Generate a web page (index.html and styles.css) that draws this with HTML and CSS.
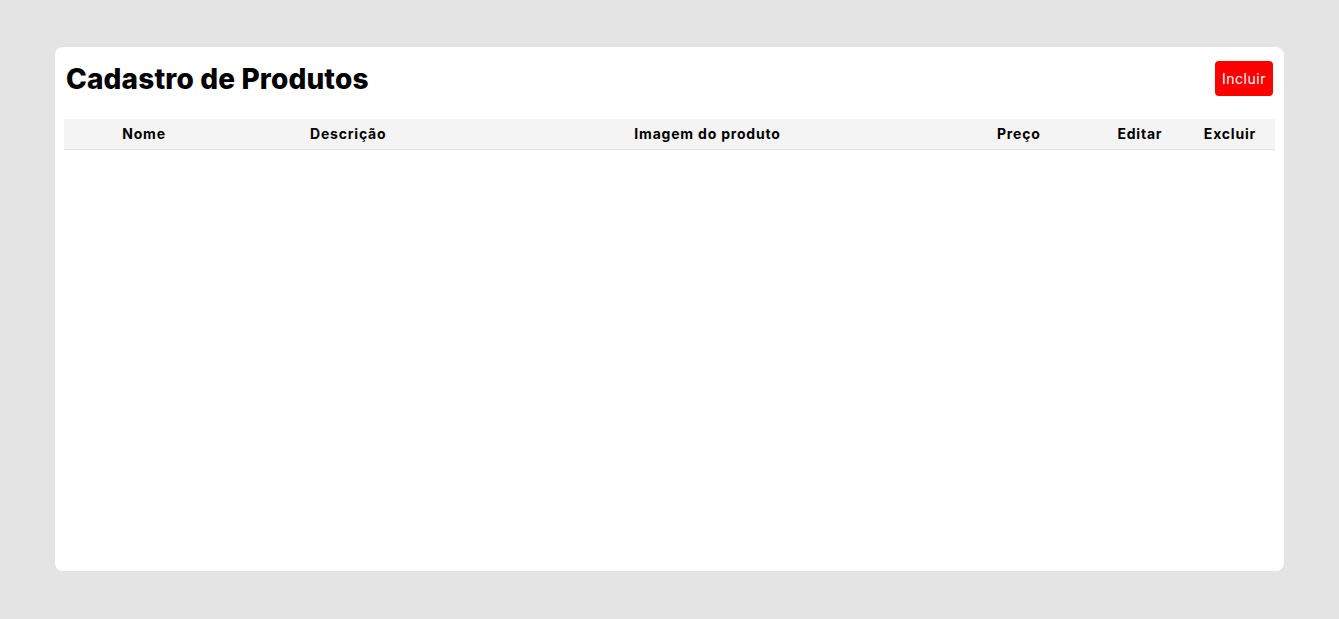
FILE: index.html
```html
<!DOCTYPE html>
<html lang="pt-BR">
<head>
<meta charset="utf-8">
<title>Cadastro de Produtos</title>
<link rel="stylesheet" href="styles.css">
</head>
<body>
<main class="card">
  <header class="card-header">
    <h1 class="title">Cadastro de Produtos</h1>
    <button class="btn-add" type="button">Incluir</button>
  </header>
  <table class="products">
    <colgroup>
      <col class="c-nome"><col class="c-desc"><col class="c-img"><col class="c-preco"><col class="c-edit"><col class="c-del">
    </colgroup>
    <thead>
      <tr>
        <th>Nome</th>
        <th>Descrição</th>
        <th>Imagem do produto</th>
        <th>Preço</th>
        <th>Editar</th>
        <th>Excluir</th>
      </tr>
    </thead>
    <tbody></tbody>
  </table>
</main>
</body>
</html>
```
FILE: styles.css
```css
* { box-sizing: border-box; }
html, body { height: 100%; }
body {
  margin: 0;
  padding: 47px 55px;
  background: #e4e4e4;
  font-family: "Inter", "Open Sans", sans-serif;
  color: #000;
}
.card {
  background: #fff;
  border-radius: 8px;
  height: 524px;
  padding: 14px 9px;
}
.card-header {
  display: flex;
  align-items: center;
  justify-content: space-between;
  height: 35px;
  padding: 0 2px 0 2px;
  margin-bottom: 23px;
}
.title {
  margin: 0;
  font-size: 28px;
  font-weight: 800;
  letter-spacing: 0.15px;
}
.btn-add {
  height: 35px;
  width: 58px;
  border: none;
  border-radius: 4px;
  background: #ff0000;
  color: #fff;
  font-family: inherit;
  font-size: 14px;
  letter-spacing: 0.5px;
  padding: 0;
}
.products {
  width: 100%;
  border-collapse: collapse;
  table-layout: fixed;
}
.products thead tr {
  background: #f4f4f4;
  border-bottom: 1px solid #e6e6e6;
}
.products th {
  height: 30px;
  padding: 0;
  font-size: 14px;
  font-weight: 700;
  letter-spacing: 0.8px;
  text-align: center;
}
.c-nome { width: 160px; }
.c-desc { width: 248px; }
.c-img { width: 470px; }
.c-preco { width: 152px; }
.c-edit { width: 90px; }
.c-del { width: 90px; }
```
